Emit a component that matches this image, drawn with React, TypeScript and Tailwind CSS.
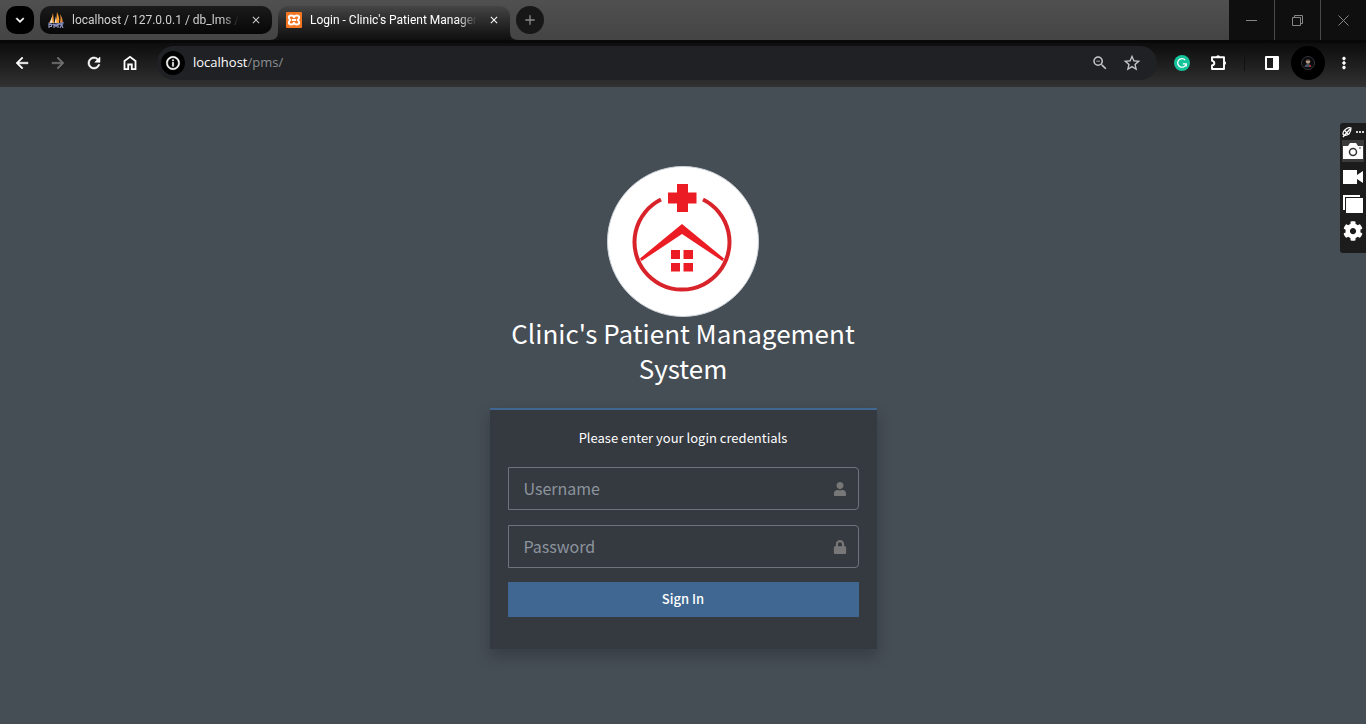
import React from "react";
import { FaUser, FaLock, FaCog } from "react-icons/fa";
import { MdStarBorder, MdArrowBack, MdArrowForward, MdRefresh, MdInfoOutline, MdMoreVert, MdZoomOut, MdExpandMore, MdClose, MdAdd, MdMoreHoriz } from "react-icons/md";

const boldIcon = "size-[18px] [&>path:last-child]:stroke-current [&>path:last-child]:stroke-[0.7px]";
const boldSmallIcon = "size-4 [&>path:last-child]:stroke-current [&>path:last-child]:stroke-[0.7px]";

function PmaIcon() {
  return (
    <svg viewBox="0 0 16 16" className="size-4 shrink-0" aria-hidden="true">
      <path d="M5 1 L6 11 L1 11 Q4 7 5 1Z" fill="#f7a03c" />
      <path d="M9 0 Q12 6 11 11 L7 11 Q9 6 9 0Z" fill="#f89c34" />
      <path d="M12 2 Q15 6 15 11 L12 11 Q13 6 12 2Z" fill="#d88a3a" />
      <path d="M3.500 5 L4.500 11 H2 Z M8 4 L8.500 11 H6.500Z" fill="#e9dccb" />
      <path d="M0 10.500 L5 12 L11 11 L16 10 L15 13 L1 13Z" fill="#6c78af" />
      <path d="M1 16 V12.500 H3.500 V14.500 H1 M6 16 V12.500 L8 14.500 L10 12.500 V16 M12 16 L13.500 12.500 L15 16" fill="none" stroke="#8d95bd" strokeWidth="1.2" />
    </svg>
  );
}

function XamppIcon() {
  return (
    <svg viewBox="0 0 16 16" className="size-4 shrink-0" aria-hidden="true">
      <rect width="16" height="16" rx="1" fill="#f37623" />
      <path d="M8 5.200 Q7.300 3.500 5.300 3.500 Q2.800 3.500 2.800 5.600 Q2.800 7 4.400 8 Q2.800 9 2.800 10.400 Q2.800 12.500 5.300 12.500 Q7.300 12.500 8 10.800 Q8.700 12.500 10.700 12.500 Q13.200 12.500 13.200 10.400 Q13.200 9 11.600 8 Q13.200 7 13.200 5.600 Q13.200 3.500 10.700 3.500 Q8.700 3.500 8 5.200Z M6 8 H10" fill="none" stroke="#fff" strokeWidth="1.9" strokeLinejoin="round" />
    </svg>
  );
}

function WindowButton({ label, children }: { label: string; children: React.ReactNode }) {
  return (
    <button type="button" aria-label={label} className="flex h-10 w-[45px] items-center justify-center bg-[#0f0f0f]">
      <svg viewBox="0 0 11 11" className="size-[11px]" fill="none" stroke="#858585" strokeWidth="1">
        {children}
      </svg>
    </button>
  );
}

function TabStrip() {
  return (
    <div className="flex h-10 items-start justify-between bg-linear-to-b from-[#505050] to-[#444444]">
      <div className="flex h-10 pl-[6px]">
        <button type="button" aria-label="Search tabs" className="mt-[6px] flex size-7 items-center justify-center rounded-[10px] bg-black text-white">
          <MdExpandMore className={boldSmallIcon} />
        </button>
        <div className="mt-[6px] ml-[6px] flex h-7 w-[232px] items-center rounded-[10px] bg-linear-to-b from-[#1b1b1b] to-[#070707] px-2 text-[#d0d0d0]">
          <PmaIcon />
          <span className="ml-2 mask-r-from-90% font-[Roboto,sans-serif] text-xs whitespace-nowrap">localhost / 127.0.0.1 / db_lms /</span>
          <button type="button" aria-label="Close tab" className="ml-auto">
            <MdClose className="size-4 p-[2px] [&>path:last-child]:stroke-current" />
          </button>
        </div>
        <div className="relative mt-[6px] ml-[6px] flex h-[34px] w-[232px] rounded-t-[10px] bg-linear-to-b from-[#454545] to-[#0f0f0f] px-2 text-white">
          <svg viewBox="0 0 8 8" className="absolute bottom-0 -left-2 size-2" aria-hidden="true"><path d="M8 0 V8 H0 Q8 8 8 0Z" fill="#141414" /></svg>
          <svg viewBox="0 0 8 8" className="absolute -right-2 bottom-0 size-2" aria-hidden="true"><path d="M0 0 V8 H8 Q0 8 0 0Z" fill="#141414" /></svg>
          <div className="flex h-7 w-full items-center">
            <XamppIcon />
            <span className="ml-2 mask-r-from-88% font-[Roboto,sans-serif] text-xs whitespace-nowrap">Login - Clinic's Patient Manager</span>
            <button type="button" aria-label="Close tab" className="ml-auto">
              <MdClose className="size-4 p-[2px] [&>path:last-child]:stroke-current" />
            </button>
          </div>
        </div>
        <button type="button" aria-label="New tab" className="mt-[6px] ml-[6px] flex size-7 items-center justify-center rounded-full bg-[#171717] text-[#8a8a8a]">
          <MdAdd className="size-4" />
        </button>
      </div>
      <div className="flex gap-px bg-[#4a4a4a]">
        <WindowButton label="Minimize"><path d="M0 5.500 H11" /></WindowButton>
        <WindowButton label="Restore"><path d="M0.500 2.500 H8.500 V10.500 H0.500Z M2.500 2.500 V0.500 H10.500 V8.500 H8.500" /></WindowButton>
        <WindowButton label="Close"><path d="M0.500 0.500 L10.500 10.500 M10.500 0.500 L0.500 10.500" /></WindowButton>
      </div>
    </div>
  );
}

function Toolbar() {
  return (
    <div className="flex h-[47px] items-center border-t-3 border-[#080808] bg-linear-to-b from-[#0d0d0d] to-[#323232] px-[13px] pb-1 text-white">
      <div className="flex gap-[18px]">
        <button type="button" aria-label="Back"><MdArrowBack className={boldIcon} /></button>
        <button type="button" aria-label="Forward" className="text-[#707070]"><MdArrowForward className={boldIcon} /></button>
        <button type="button" aria-label="Reload"><MdRefresh className={boldIcon} /></button>
        <button type="button" aria-label="Home">
          <svg viewBox="0 0 18 18" className="size-[18px]" fill="none" stroke="currentColor" strokeWidth="1.8">
            <path d="M3.500 7 L9 2.800 L14.500 7 V15.200 H10.800 V10.500 H7.200 V15.200 H3.500Z" />
          </svg>
        </button>
      </div>
      <div className="ml-[18px] flex h-[34px] flex-1 items-center rounded-full bg-[#202124] pr-[15px] pl-1">
        <button type="button" aria-label="Site information" className="flex size-6 items-center justify-center rounded-full bg-black">
          <MdInfoOutline className={boldSmallIcon} />
        </button>
        <div className="ml-2 flex-1 text-[13px] text-white">localhost<span className="text-[#8c8f93]">/pms/</span></div>
        <button type="button" aria-label="Zoom" className="text-[#c4c7c9]"><MdZoomOut className="size-[18px]" /></button>
        <button type="button" aria-label="Bookmark" className="ml-[13px] text-[#c4c7c9]"><MdStarBorder className="size-5" /></button>
      </div>
      <div className="ml-[17px] flex items-center">
        <button type="button" aria-label="Grammarly">
          <svg viewBox="0 0 16 16" className="size-4">
            <circle cx="8" cy="8" r="8" fill="#15c39a" />
            <path d="M11.200 5 A4.300 4.300 0 1 0 12.200 8.800 H8.800 M12.200 8.800 V11.500" fill="none" stroke="#fff" strokeWidth="1.3" />
          </svg>
        </button>
        <button type="button" aria-label="Extensions" className="ml-5">
          <svg viewBox="0 0 18 18" className="size-[18px]" aria-hidden="true">
            <path d="M2 3.200 H14 V15 H2 V11.500 Q4.300 11 4.300 9.200 Q4.300 7.300 2 6.800Z" fill="none" stroke="#fff" strokeWidth="1.9" strokeLinejoin="round" />
            <path d="M6 3 A2.200 2.400 0 0 1 10.200 3Z M14.500 7 A2.200 2.200 0 0 1 14.500 11.200Z" fill="#fff" />
          </svg>
        </button>
        <span className="ml-4 h-4 w-px bg-[#111111]" />
        <button type="button" aria-label="Side panel" className="ml-[19px]">
          <svg viewBox="0 0 16 16" className="size-4"><path fillRule="evenodd" d="M2 1 H14 Q15 1 15 2 V14 Q15 15 14 15 H2 Q1 15 1 14 V2 Q1 1 2 1Z M3 3 V13 H9 V3Z" fill="#fff" /></svg>
        </button>
        <button type="button" aria-label="Profile" className="ml-[11px] flex size-[34px] items-center justify-center rounded-full bg-black">
          <svg viewBox="0 0 16 16" className="size-4">
            <circle cx="8" cy="8" r="6.500" fill="#0b0b0d" stroke="#34343a" />
            <circle cx="8" cy="6.500" r="2.200" fill="#b39b86" />
            <path d="M5.500 5.500 Q8 2.500 10.500 5.500Z" fill="#282019" />
            <path d="M4.500 12 Q5 9 8 9 Q11 9 11.500 12Z" fill="#4a5665" />
            <rect x="9" y="10" width="2" height="2" fill="#a02c2c" />
          </svg>
        </button>
        <button type="button" aria-label="Menu" className="ml-[10px]"><MdMoreVert className={boldIcon} /></button>
      </div>
    </div>
  );
}

function ClinicLogo() {
  return (
    <svg viewBox="0 0 152 151" className="h-[151px] w-[152px]" role="img" aria-label="Clinic logo">
      <ellipse cx="76" cy="75.500" rx="75.500" ry="75" fill="#fff" stroke="#ced4da" />
      <path d="M54 33.500 A47.500 47.500 0 1 0 96 33.500" fill="none" stroke="#d8232a" strokeWidth="4" />
      <path d="M70 18 H81 V26.500 H89.500 V37.500 H81 V46 H70 V37.500 H61 V26.500 H70Z" fill="#ec1c24" />
      <path d="M75 58 L117 92.500 L115.500 95 L75 68 L34.500 95 L33 92.500Z" fill="#ec1c24" />
      <path d="M64 84 H73 V93 H64Z M76.500 84 H86 V93 H76.500Z M64 97 H73 V105.500 H64Z M76.500 97 H86 V105.500 H76.500Z" fill="#ec1c24" />
    </svg>
  );
}

function Field({ id, label, type, icon }: { id: string; label: string; type: string; icon: React.ReactNode }) {
  return (
    <div className="flex h-[43px] items-center rounded-r border border-[#6c757d] pr-[11px]">
      <label htmlFor={id} className="sr-only">{label}</label>
      <input id={id} type={type} placeholder={label} className="h-full min-w-0 flex-1 bg-transparent pb-0.5 pl-[15px] text-base leading-7 text-white outline-none placeholder:text-[#8c949d]" />
      <span className="text-[#777777]">{icon}</span>
    </div>
  );
}

function LoginPage() {
  return (
    <main className="flex flex-1 flex-col items-center bg-[#454d55] pt-[79px] font-['Noto_Sans_CJK_JP',sans-serif] text-white">
      <div className="flex w-[387px] flex-col items-center text-center">
        <ClinicLogo />
        <h1 className="-mt-0.5 text-[26px] leading-[35px]">Clinic's Patient Management System</h1>
      </div>
      <form onSubmit={(e) => e.preventDefault()} className="mt-[23px] flex w-[387px] flex-col border-t-2 border-[#3f6791] bg-[#353940] px-[18px] pt-[18px] pb-8 shadow-[0_7px_14px_rgba(0,0,0,0.22)]">
        <p className="text-center text-[13px] leading-5">Please enter your login credentials</p>
        <div className="mt-[19px] flex flex-col gap-[15px]">
          <Field id="username" label="Username" type="text" icon={<FaUser className="size-[14px]" />} />
          <Field id="password" label="Password" type="password" icon={<FaLock className="size-[14px]" />} />
        </div>
        <button type="submit" className="mt-[14px] h-[35px] bg-[#3f6791] pb-px text-[13px] font-medium">Sign In</button>
      </form>
    </main>
  );
}

function CaptureToolbar() {
  return (
    <aside aria-label="Screen capture" className="fixed top-[123px] right-0 flex h-[130px] w-[26px] flex-col items-center rounded-l-[3px] bg-[#1c1c1c] text-white">
      <div className="flex h-[17px] items-center gap-px">
        <svg viewBox="0 0 12 12" className="size-3"><path d="M3 9 L2 8 Q2 5 5 3 Q8 1 10 2 Q10 5 8 8 Q5 10 3 9Z M2 11 L9 3 M4 5 L7 8" fill="none" stroke="#fff" strokeWidth="1.3" /></svg>
        <MdMoreHoriz className="size-3 [&>path:last-child]:stroke-current" />
      </div>
      <button type="button" aria-label="Take photo" className="flex h-[22px] w-[22px] items-center justify-center bg-[#3b3b3b]">
        <svg viewBox="0 0 20 16" className="h-4 w-5"><path d="M0 3 H5 L7 0 H13 L15 3 H20 V16 H0Z" fill="#fff" /><circle cx="10" cy="9" r="3.500" fill="#fff" stroke="#333" strokeWidth="1.500" /><circle cx="17" cy="5" r="0.800" fill="#333" /></svg>
      </button>
      <button type="button" aria-label="Record video" className="mt-2">
        <svg viewBox="0 0 20 14" className="h-[14px] w-5"><path d="M0 0 H14 V5 L20 1 V13 L14 9 V14 H0Z" fill="#fff" /></svg>
      </button>
      <button type="button" aria-label="Gallery" className="mt-[11px]">
        <svg viewBox="0 0 20 18" className="h-[18px] w-5"><path d="M0 0 H17 V2 H2 V15 H0Z M3 3 H20 V18 H3Z" fill="#fff" /></svg>
      </button>
      <button type="button" aria-label="Settings" className="mt-2"><FaCog className="size-5" /></button>
    </aside>
  );
}

export default function App() {
  return (
    <div className="flex min-h-screen flex-col font-['Open_Sans',sans-serif]">
      <header>
        <TabStrip />
        <Toolbar />
      </header>
      <LoginPage />
      <CaptureToolbar />
    </div>
  );
}
